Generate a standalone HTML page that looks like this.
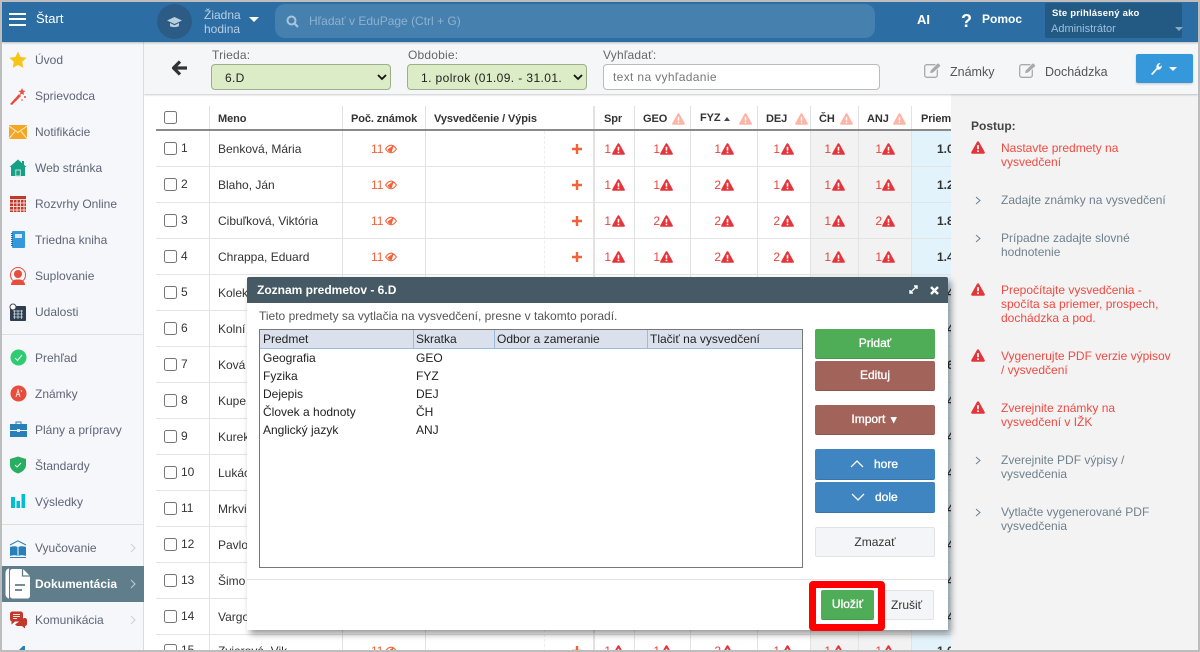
<!DOCTYPE html>
<html lang="sk"><head><meta charset="utf-8"><title>Zoznam predmetov</title>
<style>
*{box-sizing:border-box}
html,body{margin:0;padding:0;width:1200px;height:652px;overflow:hidden;background:#fff;font-family:"Liberation Sans",Arial,sans-serif;font-size:12px;color:#333}
div,span,svg,input,select{position:absolute}
#root{left:0;top:0;width:1200px;height:652px;overflow:hidden;background:#fff}
b{font-weight:700}
.t{white-space:nowrap;line-height:14px}
.nav{left:35px;color:#5f6478;white-space:nowrap;line-height:14px;font-size:12px}
.ic{left:9px;width:18px;height:18px}
.vl{top:106px;width:1px;height:546px;background:#e2e2e2}
.rl{left:156px;width:795px;height:1px;background:#e4e4e4}
.cb{left:164px;width:13px;height:13px;border:1px solid #767676;border-radius:2.5px;background:#fff}
.n{left:181px;line-height:14px;white-space:nowrap;color:#333}
.nm{left:218px;line-height:14px;white-space:nowrap;color:#333}
.c11{left:371px;color:#f4623a;line-height:14px}
.eye{left:385px;width:12px;height:10px}
.pl{left:572px;width:10px;height:10px}
.g{color:#e8453c;line-height:14px;width:12px;text-align:right}
.w{width:13px;height:12px}
.hd{top:112px;font-weight:700;font-size:11px;color:#333;white-space:nowrap;line-height:14px;letter-spacing:-.1px}
.a{color:#333;font-weight:700;line-height:14px;left:937px;width:20px}
.btn{left:815px;width:120px;border-radius:2px;color:#fff;text-align:center;font-weight:400;-webkit-text-stroke:.35px #fff;font-size:12px;line-height:29px;height:30px}
.st{left:1001px;font-size:12px;line-height:14px;white-space:nowrap}
.red{color:#f04a42}.gr{color:#6f818d}
.dt{color:#222;line-height:14px;white-space:nowrap}
</style></head><body>
<div id="root">
<svg width="0" height="0" style="position:absolute"><defs>
<symbol id="w" viewBox="0 0 13 12"><path d="M6.500 0.300c.5 0 .8.3 1 .6l5.200 9.300c.4.800 0 1.600-.9 1.600H1.200c-.9 0-1.300-.8-.9-1.600L5.500.9c.2-.3.500-.6 1-.6z" fill="#e5343a"/><rect x="5.700" y="3.800" width="1.600" height="3.800" fill="#fff"/><rect x="5.700" y="8.700" width="1.600" height="1.500" fill="#fff"/></symbol>
<symbol id="wl" viewBox="0 0 13 12"><path d="M6.500 0.300c.5 0 .8.3 1 .6l5.200 9.300c.4.800 0 1.600-.9 1.600H1.200c-.9 0-1.300-.8-.9-1.600L5.500.9c.2-.3.500-.6 1-.6z" fill="#fcb5a6"/><rect x="5.800" y="4" width="1.400" height="3.600" fill="#fff"/><rect x="5.800" y="8.700" width="1.400" height="1.400" fill="#fff"/></symbol>
<symbol id="e" viewBox="0 0 12 10"><path d="M.6 5C2.500 2.200 4.200 1.200 6 1.200S9.500 2.200 11.400 5C9.500 7.800 7.800 8.800 6 8.800S2.500 7.800.6 5z" fill="none" stroke="#f4623a" stroke-width="1.100"/><path d="M2.500 5.500L9 .8 6.500 8.500 4 7.500z" fill="#f4623a"/></symbol>
<symbol id="p" viewBox="0 0 10 10"><path d="M3.800 0h2.400v3.800H10v2.400H6.200V10H3.800V6.200H0V3.800h3.800z" fill="#f4623a"/></symbol>
<symbol id="pe" viewBox="0 0 18 16"><rect x=".7" y="2.700" width="12.600" height="12.600" rx="2" fill="none" stroke="#aaa" stroke-width="1.300"/><path d="M5.500 11.500l.8-3.200L13 1.500c.6-.5 1.500-.5 2 0l1.200 1.200c.5.500.5 1.400 0 2L9 11z" fill="#aaa" stroke="#f5f6f8" stroke-width=".8"/></symbol>
</defs></svg>

<!-- frame/background -->
<div style="left:144px;top:94px;width:807px;height:558px;background:#fff"></div>

<!-- table backgrounds -->
<div style="left:811px;top:131px;width:100px;height:521px;background:#f2f2f2"></div>
<div style="left:912px;top:131px;width:39px;height:521px;background:#e3f3fc"></div>

<div class="vl" style="left:209px"></div><div class="vl" style="left:342px"></div><div class="vl" style="left:425px"></div>
<div style="left:593px;top:106px;width:2px;height:546px;background:#e2e2e2"></div>
<div class="vl" style="left:634px"></div><div class="vl" style="left:690px"></div><div class="vl" style="left:757px"></div><div class="vl" style="left:810px"></div><div class="vl" style="left:858px"></div><div class="vl" style="left:911px"></div>
<div style="left:544px;top:131px;width:0;height:521px;border-left:1px dashed #eee"></div>

<div class="rl" style="top:166px"></div><div class="rl" style="top:202px"></div><div class="rl" style="top:238px"></div><div class="rl" style="top:274px"></div><div class="rl" style="top:310px"></div><div class="rl" style="top:346px"></div><div class="rl" style="top:382px"></div><div class="rl" style="top:418px"></div><div class="rl" style="top:454px"></div><div class="rl" style="top:490px"></div><div class="rl" style="top:526px"></div><div class="rl" style="top:562px"></div><div class="rl" style="top:598px"></div><div class="rl" style="top:634px"></div>
<div style="left:156px;top:129px;width:795px;height:2px;background:#8a8a8a"></div>

<!-- table head -->
<div class="cb" style="top:111px"></div>
<div class="hd" style="left:218px;top:112px">Meno</div>
<div class="hd" style="left:351px">Poč. známok</div>
<div class="hd" style="left:434px">Vysvedčenie / Výpis</div>
<div class="hd" style="left:604px">Spr</div>
<div class="hd" style="left:643px">GEO</div><svg class="w" style="left:672px;top:113px"><use href="#wl"/></svg>
<div class="hd" style="left:700px;top:111px">FYZ</div><div style="left:724px;top:117px;width:0;height:0;border:3.500px solid transparent;border-top:0;border-bottom:4px solid #445"></div><svg class="w" style="left:739px;top:113px"><use href="#wl"/></svg>
<div class="hd" style="left:766px">DEJ</div><svg class="w" style="left:795px;top:113px"><use href="#wl"/></svg>
<div class="hd" style="left:819px">ČH</div><svg class="w" style="left:840px;top:113px"><use href="#wl"/></svg>
<div class="hd" style="left:867px">ANJ</div><svg class="w" style="left:893px;top:113px"><use href="#wl"/></svg>
<div class="hd" style="left:921px;width:30px;overflow:hidden">Priemer</div>

<!-- rows -->
<div class="cb" style="top:142px"></div><div class="n" style="top:141px">1</div><div class="nm" style="top:142px">Benková, Mária</div>
<div class="cb" style="top:178px"></div><div class="n" style="top:177px">2</div><div class="nm" style="top:178px">Blaho, Ján</div>
<div class="cb" style="top:214px"></div><div class="n" style="top:213px">3</div><div class="nm" style="top:214px">Cibuľková, Viktória</div>
<div class="cb" style="top:250px"></div><div class="n" style="top:249px">4</div><div class="nm" style="top:250px">Chrappa, Eduard</div>
<div class="cb" style="top:286px"></div><div class="n" style="top:285px">5</div><div class="nm" style="top:286px">Kolek</div>
<div class="cb" style="top:322px"></div><div class="n" style="top:321px">6</div><div class="nm" style="top:322px">Kolní</div>
<div class="cb" style="top:358px"></div><div class="n" style="top:357px">7</div><div class="nm" style="top:358px">Ková</div>
<div class="cb" style="top:394px"></div><div class="n" style="top:393px">8</div><div class="nm" style="top:394px">Kupe</div>
<div class="cb" style="top:430px"></div><div class="n" style="top:429px">9</div><div class="nm" style="top:430px">Kurek</div>
<div class="cb" style="top:466px"></div><div class="n" style="top:465px">10</div><div class="nm" style="top:466px">Lukác</div>
<div class="cb" style="top:502px"></div><div class="n" style="top:501px">11</div><div class="nm" style="top:502px">Mrkvi</div>
<div class="cb" style="top:538px"></div><div class="n" style="top:537px">12</div><div class="nm" style="top:538px">Pavlo</div>
<div class="cb" style="top:574px"></div><div class="n" style="top:573px">13</div><div class="nm" style="top:574px">Šimo</div>
<div class="cb" style="top:610px"></div><div class="n" style="top:609px">14</div><div class="nm" style="top:610px">Vargo</div>
<div class="cb" style="top:644px"></div><div class="n" style="top:643px">15</div><div class="nm" style="top:644px">Zvjerová, Vik</div>

<div class="c11" style="top:142px">11</div><svg class="eye" style="top:144px"><use href="#e"/></svg><svg class="pl" style="top:144px"><use href="#p"/></svg>
<div class="c11" style="top:178px">11</div><svg class="eye" style="top:180px"><use href="#e"/></svg><svg class="pl" style="top:180px"><use href="#p"/></svg>
<div class="c11" style="top:214px">11</div><svg class="eye" style="top:216px"><use href="#e"/></svg><svg class="pl" style="top:216px"><use href="#p"/></svg>
<div class="c11" style="top:250px">11</div><svg class="eye" style="top:252px"><use href="#e"/></svg><svg class="pl" style="top:252px"><use href="#p"/></svg>
<div class="c11" style="top:644px">11</div><svg class="eye" style="top:646px"><use href="#e"/></svg><svg class="pl" style="top:646px"><use href="#p"/></svg>

<!-- grades row 1 -->
<div class="g" style="left:599px;top:142px">1</div><svg class="w" style="left:612px;top:143px"><use href="#w"/></svg>
<div class="g" style="left:648px;top:142px">1</div><svg class="w" style="left:660px;top:143px"><use href="#w"/></svg>
<div class="g" style="left:709px;top:142px">1</div><svg class="w" style="left:721px;top:143px"><use href="#w"/></svg>
<div class="g" style="left:768px;top:142px">1</div><svg class="w" style="left:781px;top:143px"><use href="#w"/></svg>
<div class="g" style="left:819px;top:142px">1</div><svg class="w" style="left:832px;top:143px"><use href="#w"/></svg>
<div class="g" style="left:870px;top:142px">1</div><svg class="w" style="left:882px;top:143px"><use href="#w"/></svg>
<div class="a" style="top:142px">1.0</div>
<!-- row 2 -->
<div class="g" style="left:599px;top:178px">1</div><svg class="w" style="left:612px;top:179px"><use href="#w"/></svg>
<div class="g" style="left:648px;top:178px">1</div><svg class="w" style="left:660px;top:179px"><use href="#w"/></svg>
<div class="g" style="left:709px;top:178px">2</div><svg class="w" style="left:721px;top:179px"><use href="#w"/></svg>
<div class="g" style="left:768px;top:178px">1</div><svg class="w" style="left:781px;top:179px"><use href="#w"/></svg>
<div class="g" style="left:819px;top:178px">1</div><svg class="w" style="left:832px;top:179px"><use href="#w"/></svg>
<div class="g" style="left:870px;top:178px">1</div><svg class="w" style="left:882px;top:179px"><use href="#w"/></svg>
<div class="a" style="top:178px">1.2</div>
<!-- row 3 -->
<div class="g" style="left:599px;top:214px">1</div><svg class="w" style="left:612px;top:215px"><use href="#w"/></svg>
<div class="g" style="left:648px;top:214px">2</div><svg class="w" style="left:660px;top:215px"><use href="#w"/></svg>
<div class="g" style="left:709px;top:214px">2</div><svg class="w" style="left:721px;top:215px"><use href="#w"/></svg>
<div class="g" style="left:768px;top:214px">2</div><svg class="w" style="left:781px;top:215px"><use href="#w"/></svg>
<div class="g" style="left:819px;top:214px">1</div><svg class="w" style="left:832px;top:215px"><use href="#w"/></svg>
<div class="g" style="left:870px;top:214px">2</div><svg class="w" style="left:882px;top:215px"><use href="#w"/></svg>
<div class="a" style="top:214px">1.8</div>
<!-- row 4 -->
<div class="g" style="left:599px;top:250px">1</div><svg class="w" style="left:612px;top:251px"><use href="#w"/></svg>
<div class="g" style="left:648px;top:250px">1</div><svg class="w" style="left:660px;top:251px"><use href="#w"/></svg>
<div class="g" style="left:709px;top:250px">2</div><svg class="w" style="left:721px;top:251px"><use href="#w"/></svg>
<div class="g" style="left:768px;top:250px">2</div><svg class="w" style="left:781px;top:251px"><use href="#w"/></svg>
<div class="g" style="left:819px;top:250px">1</div><svg class="w" style="left:832px;top:251px"><use href="#w"/></svg>
<div class="g" style="left:870px;top:250px">1</div><svg class="w" style="left:882px;top:251px"><use href="#w"/></svg>
<div class="a" style="top:250px">1.4</div>
<!-- row 15 -->
<div class="g" style="left:599px;top:644px">1</div><svg class="w" style="left:612px;top:645px"><use href="#w"/></svg>
<div class="g" style="left:648px;top:644px">1</div><svg class="w" style="left:660px;top:645px"><use href="#w"/></svg>
<div class="g" style="left:709px;top:644px">2</div><svg class="w" style="left:721px;top:645px"><use href="#w"/></svg>
<div class="g" style="left:768px;top:644px">1</div><svg class="w" style="left:781px;top:645px"><use href="#w"/></svg>
<div class="g" style="left:819px;top:644px">1</div><svg class="w" style="left:832px;top:645px"><use href="#w"/></svg>
<div class="g" style="left:870px;top:644px">1</div><svg class="w" style="left:882px;top:645px"><use href="#w"/></svg>
<div class="a" style="top:644px">1.0</div>
<!-- avg edges peeking beside dialog -->
<div class="a" style="top:286px">1.4</div><div class="a" style="top:322px">1.4</div><div class="a" style="top:358px">1.6</div><div class="a" style="top:394px">1.4</div><div class="a" style="top:430px">1.4</div><div class="a" style="top:466px">1.4</div><div class="a" style="top:502px">1.4</div><div class="a" style="top:538px">1.4</div><div class="a" style="top:574px">1.4</div><div class="a" style="top:610px">1.4</div>

<!-- right panel -->
<div style="left:951px;top:94px;width:247px;height:558px;background:#f3f3f3"></div>
<div class="t" style="left:971px;top:119px;font-weight:700;color:#444">Postup:</div>
<svg style="left:971px;top:141px;width:14px;height:13px"><use href="#w" width="14" height="13"/></svg>
<div class="st red" style="top:141px">Nastavte predmety na<br>vysvedčení</div>
<svg style="left:975px;top:196px;width:6px;height:9px"><path d="M1 1l4 3.500L1 8" fill="none" stroke="#6f818d" stroke-width="1"/></svg>
<div class="st gr" style="top:193px">Zadajte známky na vysvedčení</div>
<svg style="left:975px;top:234px;width:6px;height:9px"><path d="M1 1l4 3.500L1 8" fill="none" stroke="#6f818d" stroke-width="1"/></svg>
<div class="st gr" style="top:231px">Prípadne zadajte slovné<br>hodnotenie</div>
<svg style="left:971px;top:283px;width:14px;height:13px"><use href="#w" width="14" height="13"/></svg>
<div class="st red" style="top:283px">Prepočítajte vysvedčenia -<br>spočíta sa priemer, prospech,<br>dochádzka a pod.</div>
<svg style="left:971px;top:349px;width:14px;height:13px"><use href="#w" width="14" height="13"/></svg>
<div class="st red" style="top:349px">Vygenerujte PDF verzie výpisov<br>/ vysvedčení</div>
<svg style="left:971px;top:401px;width:14px;height:13px"><use href="#w" width="14" height="13"/></svg>
<div class="st red" style="top:401px">Zverejnite známky na<br>vysvedčení v IŽK</div>
<svg style="left:975px;top:456px;width:6px;height:9px"><path d="M1 1l4 3.500L1 8" fill="none" stroke="#6f818d" stroke-width="1"/></svg>
<div class="st gr" style="top:453px">Zverejnite PDF výpisy /<br>vysvedčenia</div>
<svg style="left:975px;top:508px;width:6px;height:9px"><path d="M1 1l4 3.500L1 8" fill="none" stroke="#6f818d" stroke-width="1"/></svg>
<div class="st gr" style="top:505px">Vytlačte vygenerované PDF<br>vysvedčenia</div>

<!-- toolbar -->
<div style="left:144px;top:42px;width:1054px;height:52px;background:#f5f6f8;box-shadow:0 1px 2px rgba(0,0,0,.22)"></div>
<svg style="left:172px;top:60px;width:16px;height:16px"><path d="M8 1.500L1.500 8 8 14.500M2 8h13" fill="none" stroke="#333" stroke-width="3.200"/></svg>
<div class="t" style="left:212px;top:48px;color:#666;letter-spacing:.2px">Trieda:</div>
<div style="left:211px;top:64px;width:180px;height:26px;background:#dcecc6;border:1px solid #9fae8a;border-radius:4px"></div>
<div class="t" style="left:225px;top:71px;color:#222;letter-spacing:.3px">6.D</div>
<svg style="left:377px;top:74px;width:10px;height:7px"><path d="M1 1l4 4 4-4" fill="none" stroke="#111" stroke-width="1.800"/></svg>
<div class="t" style="left:408px;top:48px;color:#666;letter-spacing:.2px">Obdobie:</div>
<div style="left:407px;top:64px;width:180px;height:26px;background:#dcecc6;border:1px solid #9fae8a;border-radius:4px"></div>
<div class="t" style="left:421px;top:71px;color:#222;letter-spacing:.4px">1. polrok (01.09. - 31.01.</div>
<svg style="left:573px;top:74px;width:10px;height:7px"><path d="M1 1l4 4 4-4" fill="none" stroke="#111" stroke-width="1.800"/></svg>
<div class="t" style="left:603px;top:48px;color:#666;letter-spacing:.2px">Vyhľadať:</div>
<div style="left:603px;top:64px;width:277px;height:26px;background:#fff;border:1px solid #bbb;border-radius:4px"></div>
<div class="t" style="left:613px;top:70px;color:#777;letter-spacing:.35px">text na vyhľadanie</div>
<svg style="left:924px;top:62px;width:18px;height:16px"><use href="#pe"/></svg>
<div class="t" style="left:950px;top:65px;color:#555;font-size:12.500px">Známky</div>
<svg style="left:1019px;top:62px;width:18px;height:16px"><use href="#pe"/></svg>
<div class="t" style="left:1045px;top:65px;color:#555;font-size:12.500px">Dochádzka</div>
<div style="left:1136px;top:54px;width:57px;height:29px;background:#3498db;border-radius:2px;box-shadow:0 1px 2px rgba(0,0,0,.2)"></div>
<svg style="left:1150px;top:62px;width:13px;height:13px"><path d="M1 12l5.500-6c-.5-2 .5-4.500 3-5l1 .2L8.500 3.500l1 1.500 2.300-1.500c.3 2.500-2 5-4.500 4L2.500 13z" fill="#fff"/></svg>
<div style="left:1169px;top:67px;width:0;height:0;border:4px solid transparent;border-top:4px solid #fff;border-bottom:0"></div>

<!-- sidebar -->
<div style="left:2px;top:42px;width:142px;height:610px;background:#f5f7fa;border-right:1px solid #dcdcdc"></div>
<svg class="ic" style="top:51px"><path d="M9 .5l2.600 5.500 6 .8-4.400 4.100 1.100 6L9 14l-5.300 2.900 1.100-6L.4 6.800l6-.8z" fill="#f5c518"/></svg>
<div class="nav" style="top:53px">Úvod</div>
<svg class="ic" style="top:87px"><path d="M1 17L10 7l2 2L3 18z" fill="#e74c3c"/><path d="M13 1l1 2.500 2.500.5-2 1.500.5 2.500-2-1.300-2 1.300.5-2.500-2-1.500 2.500-.5z" fill="#e74c3c"/><circle cx="16" cy="10" r="1" fill="#e74c3c"/><circle cx="13" cy="13" r=".8" fill="#e74c3c"/></svg>
<div class="nav" style="top:89px">Sprievodca</div>
<svg class="ic" style="top:125px"><rect y="0" width="18" height="14" fill="#f5a623"/><path d="M0 1l9 6.500L18 1M0 13.500l6-7M18 13.500l-6-7" fill="none" stroke="#fdeccd" stroke-width="1"/></svg>
<div class="nav" style="top:125px">Notifikácie</div>
<svg class="ic" style="top:159px"><path d="M9 .5L17.500 8H16v9H2V8H.5z" fill="#16a085"/><path d="M6.800 11h4.500v6H6.800z" fill="none" stroke="#bfe5dc" stroke-width="1"/><rect x="13" y="2" width="2" height="4" fill="#16a085"/></svg>
<div class="nav" style="top:161px">Web stránka</div>
<svg class="ic" style="top:196px;left:10px;width:16px;height:16px"><rect width="16" height="16" fill="#c0392b"/><path d="M0 3.500h16M0 7h16M0 10.500h16M0 14h16M3.500 3v13M7 3v13M10.500 3v13M14 3v13" stroke="#f5d6d2" stroke-width="1"/></svg>
<div class="nav" style="top:197px">Rozvrhy Online</div>
<svg class="ic" style="top:231px;left:11px;width:14px;height:17px"><rect x="1" y="0" width="13" height="17" rx="1" fill="#3498db"/><rect x="4" y="3" width="7" height="4" fill="#d6ebf8"/><path d="M1 2v13" stroke="#1f6fb0" stroke-width="2" stroke-dasharray="1 1"/></svg>
<div class="nav" style="top:233px">Triedna kniha</div>
<svg class="ic" style="top:267px"><circle cx="9" cy="8" r="7.500" fill="none" stroke="#e74c3c" stroke-width="1"/><circle cx="9" cy="7" r="4" fill="#e74c3c"/><path d="M2 18c0-3 2-5 5-5.500h4c3 .5 5 2.500 5 5.500z" fill="#e74c3c"/></svg>
<div class="nav" style="top:269px">Suplovanie</div>
<svg class="ic" style="top:303px"><rect x="1" y="3" width="16" height="15" rx="1" fill="#2c3e50"/><path d="M4 8h10M4 11h10M4 14h10M5.500 7v9M9 7v9M12.500 7v9" stroke="#cfd6dc" stroke-width=".8"/><circle cx="4" cy="4" r="3" fill="#fff" stroke="#445" stroke-width="1"/></svg>
<div class="nav" style="top:305px">Udalosti</div>
<div style="left:2px;top:334px;width:141px;height:1px;background:#dfdfdf"></div>
<svg class="ic" style="top:349px;width:17px;height:17px;left:10px"><circle cx="8.500" cy="8.500" r="8" fill="#2ecc71"/><path d="M5 9l2.500 2.500L12 6" fill="none" stroke="#eafff2" stroke-width="1"/></svg>
<div class="nav" style="top:351px">Prehľad</div>
<svg class="ic" style="top:385px;width:17px;height:17px;left:10px"><circle cx="8.500" cy="8.500" r="8" fill="#e74c3c"/><path d="M6 12l2-7 2 7M7 9.500h3M11 5l.8 2" fill="none" stroke="#fbdcd8" stroke-width="1"/></svg>
<div class="nav" style="top:387px">Známky</div>
<svg class="ic" style="top:421px;height:16px;width:17px;left:10px"><path d="M6 3V1h5v2" fill="none" stroke="#2980b9" stroke-width="1"/><rect y="3" width="17" height="6" fill="#2980b9"/><rect y="10" width="17" height="6" fill="#2980b9"/><rect x="7" y="8" width="3" height="3" fill="#d6ebf8"/></svg>
<div class="nav" style="top:423px">Plány a prípravy</div>
<svg class="ic" style="top:456px;left:10px;width:16px;height:18px"><path d="M8 .5L16 3v6c0 4-3.500 7-8 8.500C3.500 16 0 13 0 9V3z" fill="#27ae60"/><path d="M5 9l2 2 4-4" fill="none" stroke="#eafff2" stroke-width="1"/></svg>
<div class="nav" style="top:459px">Štandardy</div>
<svg class="ic" style="top:494px;left:11px;width:14px;height:14px"><rect y="3" width="4" height="11" fill="#00bcd4"/><rect x="5.500" y="7" width="3.500" height="7" fill="#00bcd4"/><rect x="10.500" y="0" width="3.500" height="14" fill="#00bcd4"/></svg>
<div class="nav" style="top:495px">Výsledky</div>
<div style="left:2px;top:524px;width:141px;height:1px;background:#dfdfdf"></div>
<svg class="ic" style="top:540px"><path d="M1 5L9 .8 17 5" fill="none" stroke="#2980b9" stroke-width="1"/><path d="M1 7c3-1 6-1 7.500 0v9C7 15 4 15 1 16zM17 7c-3-1-6-1-7.500 0v9c1.500-1 4.500-1 7.500 0z" fill="#2980b9"/><path d="M1 17.500h16" stroke="#2980b9" stroke-width="1"/></svg>
<div class="nav" style="top:541px">Vyučovanie</div>
<svg style="left:130px;top:543px;width:7px;height:10px"><path d="M1 1l4 4-4 4" fill="none" stroke="#d0d3d6" stroke-width="1.200"/></svg>
<div style="left:2px;top:566px;width:142px;height:36px;background:#607d8b"></div>
<svg style="left:5px;top:568px;width:26px;height:31px"><path d="M4 .5C1.500 1 .5 3 .5 5v21c0 2 1 4 3.500 4.500z" fill="#fff"/><path d="M7.500 1H18l7 7v20c0 1.200-1 2.500-2.500 2.500h-15C6 30.500 5 29.200 5 28V3.500C5 2 6 1 7.500 1z" fill="#fff"/><path d="M17.500 1v7h7.500" fill="none" stroke="#607d8b" stroke-width="1.300"/><path d="M10 17h10M10 22h7" stroke="#607d8b" stroke-width="1.800"/></svg>
<div class="nav" style="top:577px;color:#fff;font-weight:700">Dokumentácia</div>
<svg style="left:130px;top:579px;width:7px;height:10px"><path d="M1 1l4 4-4 4" fill="none" stroke="#b7c6ce" stroke-width="1.200"/></svg>
<svg class="ic" style="top:611px"><path d="M1 3c0-1.500 1-2.500 2.500-2.500h8C13 .5 14 1.500 14 3v5c0 1.500-1 2.500-2.500 2.500H6L2.500 13.500V10.300C1.500 10 1 9 1 8z" fill="#c0392b"/><path d="M15 7h1c1 0 2 1 2 2v4c0 1-1 2-2 2v2.500L13 15H8l-2-1.500" fill="#c0392b"/><path d="M4 3.500h7M4 5.500h7M4 7.500h4" stroke="#fbe0dc" stroke-width="1"/></svg>
<div class="nav" style="top:613px">Komunikácia</div>
<svg style="left:130px;top:615px;width:7px;height:10px"><path d="M1 1l4 4-4 4" fill="none" stroke="#d0d3d6" stroke-width="1.200"/></svg>
<svg style="left:15px;top:646px;width:12px;height:6px"><path d="M2 6L8 0h2v6z" fill="#2980b9"/></svg>

<!-- header -->
<div style="left:2px;top:2px;width:1196px;height:40px;background:#2c6da4;box-shadow:0 1px 2px rgba(0,0,0,.25)"></div>
<div style="left:9px;top:13px;width:17px;height:2px;background:#fff"></div><div style="left:9px;top:18px;width:17px;height:2px;background:#fff"></div><div style="left:9px;top:24px;width:17px;height:2px;background:#fff"></div>
<div class="t" style="left:36px;top:12px;color:#fff;font-size:13px">Štart</div>
<div style="left:157px;top:4px;width:35px;height:35px;border-radius:50%;background:#2c5c85"></div>
<svg style="left:167px;top:16px;width:15px;height:13px"><path d="M7.500 1L15 4.500 7.500 8 0 4.500z" fill="#b9cfe0"/><path d="M3 7v3c1 1.500 7.500 1.500 9 0V7L7.500 9.200z" fill="#b9cfe0"/></svg>
<div class="t" style="left:204px;top:8px;color:#b9d0e3;line-height:14px;font-size:12px">Žiadna<br>hodina</div>
<div style="left:249px;top:17px;width:0;height:0;border:5px solid transparent;border-top:5px solid #fff;border-bottom:0"></div>
<div style="left:275px;top:4px;width:600px;height:34px;background:#4580ae;border-radius:10px"></div>
<svg style="left:286px;top:15px;width:13px;height:13px"><circle cx="5.500" cy="5.500" r="4" fill="none" stroke="#a9c5dc" stroke-width="2"/><path d="M8.500 8.500L12 12" stroke="#a9c5dc" stroke-width="2.200"/></svg>
<div class="t" style="left:309px;top:14px;color:#8fb2cf;font-size:12px">Hľadať v EduPage (Ctrl + G)</div>
<div class="t" style="left:917px;top:13px;color:#fff;font-weight:700;font-size:13px">AI</div>
<div class="t" style="left:961px;top:11px;color:#fff;font-weight:700;font-size:18px;line-height:20px">?</div>
<div class="t" style="left:982px;top:12px;color:#fff;font-weight:700;font-size:12px">Pomoc</div>
<div style="left:1045px;top:3px;width:137px;height:35px;background:#235a84;border-radius:2px"></div>
<div class="t" style="left:1052px;top:7px;color:#fff;font-weight:700;font-size:9.500px;letter-spacing:.2px">Ste prihlásený ako</div>
<div class="t" style="left:1051px;top:22px;color:#9cc0de;font-size:11px">Administrátor</div>
<div style="left:1175px;top:27px;width:0;height:0;border:4px solid transparent;border-top:4px solid #8fa9bf;border-bottom:0"></div>

<!-- dialog -->
<div style="left:247px;top:277px;width:701px;height:353px;background:#fff;border-radius:2px 2px 0 0;box-shadow:3px 4px 7px rgba(0,0,0,.4)"></div>
<div style="left:247px;top:277px;width:701px;height:26px;background:#455a64;border-radius:2px 2px 0 0"></div>
<div class="t" style="left:257px;top:283px;color:#fff;font-weight:700;font-size:12px">Zoznam predmetov - 6.D</div>
<svg style="left:909px;top:285px;width:9px;height:9px"><path d="M1 8L8 1M5 1h3v3M1 5v3h3" fill="none" stroke="#fff" stroke-width="1.400"/></svg>
<svg style="left:930px;top:286px;width:9px;height:9px"><path d="M1 1l7 7M8 1L1 8" fill="none" stroke="#fff" stroke-width="2.400"/></svg>
<div class="t" style="left:259px;top:309px;color:#555">Tieto predmety sa vytlačia na vysvedčení, presne v takomto poradí.</div>
<div style="left:259px;top:329px;width:544px;height:239px;background:#fff;border:1px solid #777"></div>
<div style="left:260px;top:330px;width:542px;height:19px;background:#dbe1ec;border-bottom:1px solid #9dbbdc"></div>
<div style="left:413px;top:330px;width:1px;height:19px;background:#9dbbdc"></div><div style="left:494px;top:330px;width:1px;height:19px;background:#9dbbdc"></div><div style="left:647px;top:330px;width:1px;height:19px;background:#9dbbdc"></div>
<div class="dt" style="left:263px;top:332px">Predmet</div><div class="dt" style="left:416px;top:332px">Skratka</div><div class="dt" style="left:497px;top:332px">Odbor a zameranie</div><div class="dt" style="left:650px;top:332px">Tlačiť na vysvedčení</div>
<div class="dt" style="left:263px;top:351px">Geografia</div><div class="dt" style="left:416px;top:351px">GEO</div>
<div class="dt" style="left:263px;top:369px">Fyzika</div><div class="dt" style="left:416px;top:369px">FYZ</div>
<div class="dt" style="left:263px;top:387px">Dejepis</div><div class="dt" style="left:416px;top:387px">DEJ</div>
<div class="dt" style="left:263px;top:405px">Človek a hodnoty</div><div class="dt" style="left:416px;top:405px">ČH</div>
<div class="dt" style="left:263px;top:423px">Anglický jazyk</div><div class="dt" style="left:416px;top:423px">ANJ</div>

<div class="btn" style="top:329px;background:#4fac57;border-bottom:1px solid #449a4b">Pridať</div>
<div class="btn" style="top:361px;background:#a2635a;border-bottom:1px solid #8f564e">Edituj</div>
<div class="btn" style="top:405px;background:#a2635a;border-bottom:1px solid #8f564e">Import <span style="position:static;font-size:10px">▼</span></div>
<div class="btn" style="top:449px;height:31px;background:#3f85c1;border-bottom:1px solid #3676ac;line-height:30px"><span style="left:59px;top:0">hore</span></div>
<svg style="left:850px;top:459px;width:14px;height:9px"><path d="M1 8l6-6 6 6" fill="none" stroke="#fff" stroke-width="1.300"/></svg>
<div class="btn" style="top:482px;height:31px;background:#3f85c1;border-bottom:1px solid #3676ac;line-height:30px"><span style="left:60px;top:0">dole</span></div>
<svg style="left:851px;top:493px;width:14px;height:9px"><path d="M1 1l6 6 6-6" fill="none" stroke="#fff" stroke-width="1.300"/></svg>
<div class="btn" style="top:527px;background:#f4f5f8;border:1px solid #e1e3e6;color:#333;-webkit-text-stroke:0;line-height:28px">Zmazať</div>

<div style="left:247px;top:579px;width:701px;height:1px;background:#e3e3e3"></div>
<div style="left:880px;top:590px;width:54px;height:30px;background:#f4f5f8;border:1px solid #e1e3e6;border-radius:2px"></div>
<div class="t" style="left:891px;top:598px;color:#333">Zrušiť</div>
<div style="left:809px;top:581px;width:76px;height:50px;background:#fff;border:7px solid #f00;border-radius:4px"></div>
<div style="left:821px;top:590px;width:53px;height:30px;background:#4fac57;border-bottom:1px solid #449a4b;border-radius:2px;color:#fff;text-align:center;-webkit-text-stroke:.35px #fff;line-height:29px">Uložiť</div>

<!-- outer frame -->
<div style="left:0;top:0;width:1200px;height:652px;border:2px solid #bdbdbd"></div>
</div>
</body></html>
